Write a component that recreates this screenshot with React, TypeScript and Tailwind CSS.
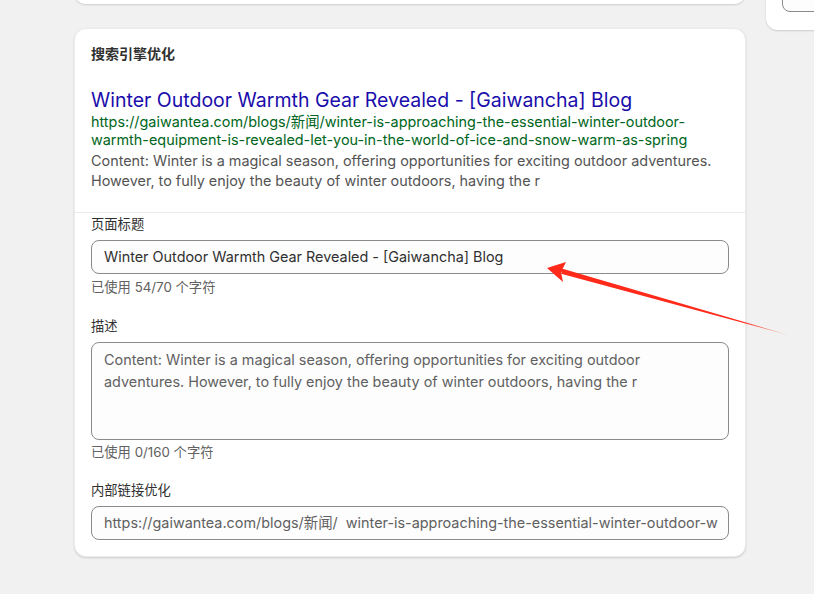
import React from "react";

const font = {
  fontFamily: '"Inter", "Noto Sans CJK SC", sans-serif',
};

const urlText =
  "https://gaiwantea.com/blogs/新闻/winter-is-approaching-the-essential-winter-outdoor-warmth-equipment-is-revealed-let-you-in-the-world-of-ice-and-snow-warm-as-spring";

const descText =
  "Content: Winter is a magical season, offering opportunities for exciting outdoor adventures. However, to fully enjoy the beauty of winter outdoors, having the r";

// Red annotation arrow drawn over the page
const Arrow = () => (
  <svg
    className="absolute left-0 top-0 pointer-events-none"
    width="814"
    height="594"
    viewBox="0 0 814 594"
  >
    <defs>
      <linearGradient id="fade" x1="548" y1="268" x2="792" y2="336" gradientUnits="userSpaceOnUse">
        <stop offset="0" stopColor="#ff2a1a" />
        <stop offset="0.8" stopColor="#ff2a1a" />
        <stop offset="1" stopColor="#ff2a1a" stopOpacity="0.2" />
      </linearGradient>
    </defs>
    <polygon points="560,268 792,336 562,274" fill="url(#fade)" />
    <polygon points="547,268 566,262 561,272 563,282" fill="#ff2a1a" />
  </svg>
);

const FieldLabel = ({ children, gap }: { children: React.ReactNode; gap: string }) => (
  <div className={`text-[13.3px] leading-5 text-[#303030] ${gap}`}>{children}</div>
);

const HelpText = ({ children, gap }: { children: React.ReactNode; gap: string }) => (
  <div className={`text-[13.3px] leading-5 text-[#616161] ${gap}`}>{children}</div>
);

export default function App() {
  return (
    <div className="relative w-[814px] h-[594px] overflow-hidden bg-[#f1f1f1]" style={font}>
      <div className="flex gap-5 pl-[74px]">
        {/* main column */}
        <div className="w-[672px] shrink-0">
          <div className="h-[40px] -mt-[36px] bg-white rounded-xl shadow-[0_1px_2px_rgba(0,0,0,0.15)]" />

          <div className="mt-6 bg-white rounded-xl shadow-[0_1px_2px_rgba(0,0,0,0.15)] border border-[#ebebeb] pb-[16px]">
            <div className="px-4 pt-[15px] pb-[21px]">
              <h2 className="text-[14px] leading-5 font-semibold text-[#303030]">搜索引擎优化</h2>
              <div className="mt-[23px] text-[19.5px] leading-[26px] text-[#1a0dab]">
                Winter Outdoor Warmth Gear Revealed - [Gaiwancha] Blog
              </div>
              <div className="text-[14.4px] leading-[18px] text-[#006621] pr-8">{urlText}</div>
              <div className="mt-[2px] text-[14.4px] leading-5 text-[#545454]">{descText}</div>
            </div>

            <div className="border-t border-[#ebebeb] px-4 pt-[1px]">
              <FieldLabel gap="mb-[6px]">页面标题</FieldLabel>
              <div className="h-[34px] rounded-lg border border-[#8a8a8a] bg-[#fdfdfd] px-3 flex items-center text-[14.4px] text-[#303030]">
                Winter Outdoor Warmth Gear Revealed - [Gaiwancha] Blog
              </div>
              <HelpText gap="mt-[3px]">已使用 54/70 个字符</HelpText>

              <div className="mt-[19px]">
                <FieldLabel gap="mb-[6px]">描述</FieldLabel>
                <div className="h-[98px] rounded-lg border border-[#8a8a8a] bg-[#fdfdfd] pl-3 pr-12 pt-[6px] text-[14.4px] leading-[22px] text-[#616161]">
                  {descText}
                </div>
                <HelpText gap="mt-[2px]">已使用 0/160 个字符</HelpText>
              </div>

              <div className="mt-[18px]">
                <FieldLabel gap="mb-[6px]">内部链接优化</FieldLabel>
                <div className="h-[34px] rounded-lg border border-[#8a8a8a] bg-[#fdfdfd] px-3 flex items-center text-[14.4px] text-[#616161] whitespace-nowrap overflow-hidden">
                  https://gaiwantea.com/blogs/新闻/&nbsp; winter-is-approaching-the-essential-winter-outdoor-w
                </div>
              </div>
            </div>
          </div>
        </div>

        {/* right column */}
        <div className="w-[300px] shrink-0">
          <div className="h-[70px] -mt-[40px] bg-white rounded-xl shadow-[0_1px_2px_rgba(0,0,0,0.15)] px-4 pt-[18px]">
            <div className="h-[34px] rounded-lg border border-[#8a8a8a] bg-[#fdfdfd]" />
          </div>
        </div>
      </div>
      <Arrow />
    </div>
  );
}
